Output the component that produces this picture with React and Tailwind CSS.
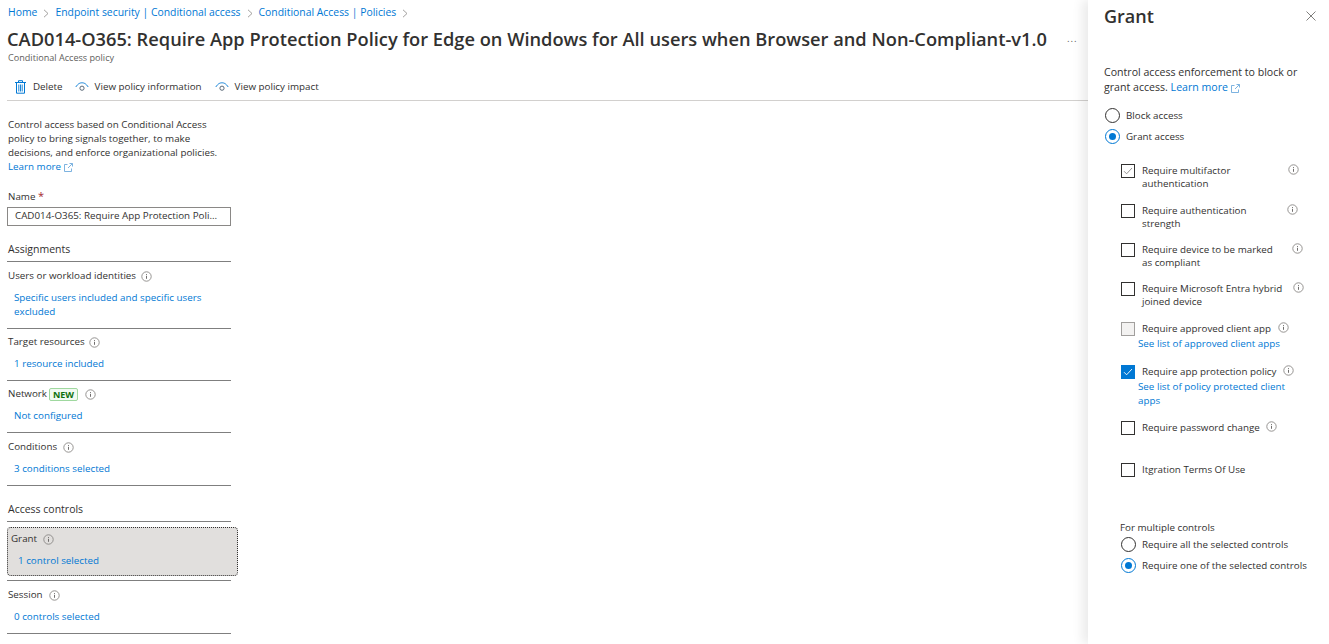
import React from 'react';

const InfoIcon = ({ className = '' }) => (
  <svg width="11" height="11" viewBox="0 0 11 11" fill="none" className={`shrink-0 ${className}`}>
    <circle cx="5.5" cy="5.5" r="4.7" stroke="#8a8886" strokeWidth="0.9" />
    <path d="M5.5 4.8v3" stroke="#605e5c" strokeWidth="0.9" />
    <path d="M5.5 3v0.9" stroke="#605e5c" strokeWidth="0.9" />
  </svg>
);

const ExternalIcon = () => (
  <svg width="9" height="9" viewBox="0 0 9 9" fill="none" className="inline-block">
    <path d="M3.5 1.5H0.5V8.5H7.5V5.5" stroke="#5c9fd8" strokeWidth="0.8" />
    <path d="M4 5L8.2 0.8M5.5 0.5H8.5V3.5" stroke="#5c9fd8" strokeWidth="0.8" />
  </svg>
);

const EyeIcon = () => (
  <svg width="14" height="10" viewBox="0 0 14 10" fill="none">
    <path d="M0.8 5C3 1.6 5 0.8 7 0.8S11 1.6 13.2 5" stroke="#0078d4" strokeWidth="0.9" />
    <circle cx="7" cy="6.2" r="2.1" stroke="#4a5a6a" strokeWidth="0.9" />
  </svg>
);

const TrashIcon = () => (
  <svg width="11" height="14" viewBox="0 0 11 14" fill="none">
    <path d="M0 2.5H11M3.5 2.5V0.7H7.5V2.5" stroke="#0078d4" strokeWidth="1" />
    <path d="M1.5 2.5V13.2H9.5V2.5" stroke="#0078d4" strokeWidth="1" />
    <path d="M3.8 4.5V11.5M5.5 4.5V11.5M7.2 4.5V11.5" stroke="#0078d4" strokeWidth="0.9" />
  </svg>
);

const Chevron = () => (
  <svg width="6" height="9" viewBox="0 0 6 9" fill="none" className="mx-[6px]">
    <path d="M1 0.8L5 4.5L1 8.2" stroke="#8a8886" strokeWidth="0.8" />
  </svg>
);

const Row = ({ label, extra, gap = 'ml-[6px]', spacing = 'pt-[7px] pb-[8px]', children }) => (
  <div className={`border-b border-[#7f7f7f] ${spacing}`}>
    <div className="flex items-center h-[14px] pl-px">
      <span>{label}</span>
      {extra}
      <InfoIcon className={gap} />
    </div>
    <div className="mt-[8px] pl-[7px] text-[#0078d4]">{children}</div>
  </div>
);

const Radio = ({ checked }) => (
  <span className={`flex items-center justify-center w-[15px] h-[15px] rounded-full border shrink-0 ${checked ? 'border-[#0078d4]' : 'border-[#323130]'}`}>
    {checked && <span className="w-[7px] h-[7px] rounded-full bg-[#0078d4]" />}
  </span>
);

const Checkbox = ({ state }) => {
  if (state === 'checked') {
    return (
      <span className="flex items-center justify-center w-[14px] h-[14px] bg-[#0078d4] shrink-0">
        <svg width="10" height="8" viewBox="0 0 10 8" fill="none">
          <path d="M1 4.2L3.6 6.8L9 1" stroke="#ffffff" strokeWidth="0.9" />
        </svg>
      </span>
    );
  }
  if (state === 'disabled') {
    return <span className="w-[14px] h-[14px] bg-[#f3f2f1] border border-[#a19f9d] shrink-0" />;
  }
  if (state === 'ghost') {
    return (
      <span className="flex items-center justify-center w-[14px] h-[14px] border border-[#323130] shrink-0">
        <svg width="10" height="8" viewBox="0 0 10 8" fill="none">
          <path d="M1 4.2L3.6 6.8L9 1" stroke="#8a8886" strokeWidth="0.9" />
        </svg>
      </span>
    );
  }
  return <span className="w-[14px] h-[14px] border border-[#323130] shrink-0" />;
};

const Control = ({ state, lines, labelWidth, top, link }) => (
  <div className={`ml-[17px] ${top}`}>
    <div className="flex items-start">
      <Checkbox state={state} />
      <div className={`ml-[7px] leading-[13px] ${labelWidth}`}>
        {lines.map((l) => (
          <div key={l}>{l}</div>
        ))}
      </div>
      {labelWidth && <InfoIcon />}
    </div>
    {link && (
      <div className="ml-[17px] mt-px leading-[14px] text-[#0078d4] w-[160px]">{link}</div>
    )}
  </div>
);

export default function App() {
  return (
    <div className="flex h-[644px] w-[1329px] overflow-hidden bg-white text-[#323130] text-[9.8px] font-['Open_Sans',sans-serif]">
      <main className="w-[1088px] shrink-0">
        <nav className="flex items-center h-[14px] mt-[6px] ml-[8px] text-[10.4px] text-[#0078d4]">
          <span>Home</span>
          <Chevron />
          <span>Endpoint security | Conditional access</span>
          <Chevron />
          <span>Conditional Access | Policies</span>
          <Chevron />
        </nav>
        <div className="flex items-center mt-[8px] ml-[7px] h-[22px]">
          <h1 className="text-[18.25px] font-semibold whitespace-nowrap leading-[22px]">
            CAD014-O365: Require App Protection Policy for Edge on Windows for All users when Browser and Non-Compliant-v1.0
          </h1>
          <span className="ml-[20px] text-[#605e5c] tracking-[1px]">...</span>
        </div>
        <div className="ml-[8px] h-[14px] leading-[14px] mt-[1px] text-[#605e5c] text-[9.1px]">Conditional Access policy</div>
        <div className="flex items-center h-[14px] mt-[15px] ml-[15px]">
          <TrashIcon />
          <span className="ml-[7px]">Delete</span>
          <span className="ml-[12px]"><EyeIcon /></span>
          <span className="ml-[6px]">View policy information</span>
          <span className="ml-[13px]"><EyeIcon /></span>
          <span className="ml-[6px]">View policy impact</span>
        </div>
        <div className="h-px bg-[#d2d0ce] mt-[6px] ml-[7px]" />

        <div className="ml-[7px] w-[224px] leading-[14px]">
          <div className="pl-px pt-[17px] w-[222px]">
            Control access based on Conditional Access
            <br />
            policy to bring signals together, to make
            <br />
            decisions, and enforce organizational policies.
            <br />
            <span className="text-[#0078d4]">Learn more</span> <ExternalIcon />
          </div>
          <div className="mt-[15px] h-[14px] pl-px">
            Name <span className="text-[#a4262c] text-[11px]">*</span>
          </div>
          <div className="mt-[4px] h-[19px] border border-[#8a8886] pl-[7px] leading-[16px] whitespace-nowrap overflow-hidden">
            CAD014-O365: Require App Protection Poli...
          </div>
          <div className="mt-[15px] text-[10.5px] leading-[16px] pl-px pb-[4px] border-b border-[#7f7f7f]">Assignments</div>
          <Row label="Users or workload identities" gap="ml-[5px]" spacing="pt-[7px] pb-[9px]">
            Specific users included and specific users
            <br />
            excluded
          </Row>
          <Row label="Target resources" gap="ml-[4px]" spacing="pt-[6px] pb-[9px]">1 resource included</Row>
          <Row
            label="Network"
            gap="ml-[7px]"
            spacing="pt-[6px] pb-[9px]"
            extra={
              <span className="ml-[2px] px-[3px] h-[13px] leading-[11px] rounded-[2px] border border-[#9fd89f] bg-[#f1faf1] text-[#0e700e] font-bold text-[9px]">
                NEW
              </span>
            }
          >
            Not configured
          </Row>
          <Row label="Conditions" spacing="pt-[7px] pb-[9px]">3 conditions selected</Row>
          <div className="mt-[15px] text-[10.5px] leading-[16px] pb-[4px] pl-px border-b border-[#7f7f7f]">Access controls</div>
          <div className="mt-[5px] w-[231px] h-[49px] rounded-[4px] border border-dotted border-[#323130] bg-[#e1dfdd] pl-[3px] pt-[4px]">
            <div className="flex items-center h-[14px]">
              <span>Grant</span>
              <InfoIcon className="ml-[6px]" />
            </div>
            <div className="mt-[8px] pl-[7px] text-[#0078d4]">1 control selected</div>
          </div>
          <div className="h-[5px] border-b border-[#7f7f7f]" />
          <Row label="Session" spacing="pt-[7px] pb-[9px]">0 controls selected</Row>
        </div>
      </main>

      <aside className="relative flex-1 pl-[16px] shadow-[-6px_0_10px_rgba(0,0,0,0.08)] bg-white leading-[14px]">
        <div className="flex items-center justify-between h-[24px] mt-[4px] pr-[13px]">
          <h2 className="text-[18px] font-semibold leading-[24px]">Grant</h2>
          <svg width="10" height="10" viewBox="0 0 10 10" fill="none">
            <path d="M0.5 0.5L9.5 9.5M9.5 0.5L0.5 9.5" stroke="#605e5c" strokeWidth="0.8" />
          </svg>
        </div>
        <div className="mt-[37px] text-[10.6px] leading-[15px] whitespace-nowrap">
          Control access enforcement to block or
          <br />
          grant access. <span className="text-[#0078d4]">Learn more</span> <ExternalIcon />
        </div>
        <div className="flex items-center mt-[13px] ml-px gap-[6px]">
          <Radio />
          <span>Block access</span>
        </div>
        <div className="flex items-center mt-[6px] ml-px gap-[6px]">
          <Radio checked />
          <span>Grant access</span>
        </div>

        <Control state="ghost" top="mt-[20px]" labelWidth="w-[146px]" lines={['Require multifactor', 'authentication']} />
        <Control top="mt-[14px]" labelWidth="w-[145px]" lines={['Require authentication', 'strength']} />
        <Control top="mt-[13px]" labelWidth="w-[150px]" lines={['Require device to be marked', 'as compliant']} />
        <Control top="mt-[13px]" labelWidth="w-[151px]" lines={['Require Microsoft Entra hybrid', 'joined device']} />
        <Control state="disabled" top="mt-[14px]" labelWidth="w-[136px]" lines={['Require approved client app']} link="See list of approved client apps" />
        <Control state="checked" top="mt-[14px]" labelWidth="w-[141px]" lines={['Require app protection policy']} link="See list of policy protected client apps" />
        <Control top="mt-[13px]" labelWidth="w-[124px]" lines={['Require password change']} />
        <Control top="mt-[28px]" lines={['Itgration Terms Of Use']} />

        <div className="ml-[16px] mt-[44px]">For multiple controls</div>
        <div className="flex items-center ml-[17px] mt-[2px] gap-[6px]">
          <Radio />
          <span>Require all the selected controls</span>
        </div>
        <div className="flex items-center ml-[17px] mt-[6px] gap-[6px]">
          <Radio checked />
          <span>Require one of the selected controls</span>
        </div>
      </aside>
    </div>
  );
}
